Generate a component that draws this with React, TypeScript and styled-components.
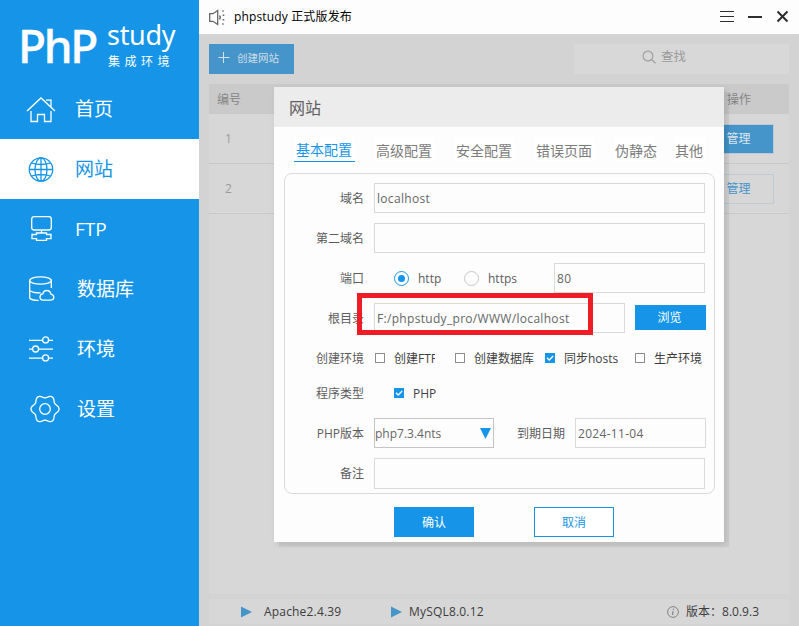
import React from "react";
import styled, { createGlobalStyle, css } from "styled-components";

const BLUE = "#1695e8";

const GlobalStyle = createGlobalStyle`
  * { box-sizing: border-box; }
  body {
    margin: 0;
    font-family: "Open Sans", "Noto Sans CJK SC", sans-serif;
    font-size: 12px;
    line-height: 16px;
    color: #5c5c5c;
    overflow: hidden;
  }
`;

const Window = styled.div`
  position: relative;
  display: flex;
  width: 799px;
  height: 626px;
  background: #d3d3d3;
`;

/* Sidebar */
const Sidebar = styled.nav`
  width: 199px;
  flex: none;
  background: ${BLUE};
  color: #fff;
`;
const Logo = styled.div`
  display: flex;
  height: 79px;
  padding-left: 18px;
`;
const LogoMark = styled.div`
  width: 89px;
  padding-top: 22px;
  font: 500 46px/46px "Noto Sans", sans-serif;
  letter-spacing: -2.3px;
  -webkit-text-stroke: 0.4px #fff;
  white-space: nowrap;
`;
const LogoSide = styled.div`
  padding-top: 19px;
`;
const LogoWord = styled.div`
  font: 400 27px/32px "Noto Sans", sans-serif;
  letter-spacing: -0.3px;
  height: 34px;
`;
const LogoTag = styled.div`
  padding-left: 1px;
  font-size: 12px;
  line-height: 17px;
  letter-spacing: 4.5px;
  white-space: nowrap;
`;
const NavItem = styled.a<{ $active?: boolean }>`
  display: flex;
  align-items: center;
  height: 60px;
  padding-left: 26px;
  font-size: 19px;
  line-height: 28px;
  color: ${(p) => (p.$active ? BLUE : "#fff")};
  background: ${(p) => (p.$active ? "#fff" : "transparent")};
`;
const NavIcon = styled.svg`
  width: 34px;
  height: 30px;
  margin-right: 15px;
  flex: none;
  fill: none;
  stroke: currentColor;
  stroke-width: 1.3;
`;
const NavLabel = styled.span<{ $shift?: number }>`
  padding-left: ${(p) => p.$shift ?? 0}px;
`;

/* Main area */
const Main = styled.main`
  flex: 1;
  display: flex;
  flex-direction: column;
`;
const TitleBar = styled.header`
  display: flex;
  align-items: center;
  height: 34px;
  padding: 0 9px 0 10px;
  background: #fdfdfd;
  color: #111;
`;
const Notice = styled.span`
  flex: 1;
  padding-left: 9px;
  letter-spacing: 0.15px;
  color: #000;
`;
const Body = styled.div`
  flex: 1;
  display: flex;
  flex-direction: column;
  padding: 10px 10px 2px;
`;
const Toolbar = styled.div`
  display: flex;
  justify-content: space-between;
  height: 30px;
  margin-bottom: 10px;
`;
const CreateButton = styled.button`
  display: flex;
  align-items: center;
  gap: 7px;
  width: 85px;
  padding: 0 0 3px 9px;
  border: 0;
  background: #4595cb;
  color: #cfdde6;
  font: inherit;
  font-size: 10.5px;
  white-space: nowrap;
`;
const Search = styled.div`
  display: flex;
  align-items: center;
  gap: 5px;
  width: 215px;
  padding: 0 0 4px 68px;
  background: #d8d8d8;
  color: #9b9b9b;
  font-size: 12.5px;
`;
const Table = styled.section`
  flex: 1;
  background: #d7d7d7;
`;
const TableRow = styled.div<{ $head?: boolean }>`
  display: flex;
  justify-content: space-between;
  align-items: center;
  height: ${(p) => (p.$head ? 30 : 50)}px;
  padding: ${(p) => (p.$head ? "2px 38px 0 8px" : "0 15px 0 16px")};
  color: ${(p) => (p.$head ? "#858585" : "#9a9a9a")};
  background: ${(p) => (p.$head ? "#cacaca" : "transparent")};
  border-bottom: ${(p) => (p.$head ? "0" : "1px solid #c8c8c8")};
`;
const ManageButton = styled.button<{ $solid?: boolean }>`
  width: 82px;
  height: 30px;
  padding: 0 0 0 11px;
  text-align: center;
  font: inherit;
  border: 1px solid #bccbd6;
  background: ${(p) => (p.$solid ? "#4595cb" : "transparent")};
  color: ${(p) => (p.$solid ? "#dde6ec" : "#4595cb")};
`;
const StatusBar = styled.footer`
  display: flex;
  align-items: center;
  height: 25px;
  margin-top: 5px;
  padding: 0 30px 0 32px;
  background: #d7d7d7;
  color: #3d3d3d;
`;
const Service = styled.div<{ $width: number; $gap: number }>`
  display: flex;
  align-items: center;
  gap: ${(p) => p.$gap}px;
  width: ${(p) => p.$width}px;
  letter-spacing: 0.18px;
  white-space: nowrap;
`;
const Version = styled.div`
  display: flex;
  align-items: center;
  gap: 7px;
  margin-left: auto;
`;

/* Dialog */
const Dialog = styled.section`
  position: absolute;
  left: 274px;
  top: 87px;
  width: 450px;
  height: 455px;
  background: #fdfdfd;
  box-shadow: 5px 5px 0 rgba(0, 0, 0, 0.05), 2px 2px 6px rgba(0, 0, 0, 0.1);
`;
const DialogTitle = styled.h1`
  margin: 0;
  height: 40px;
  padding: 10px 15px;
  background: #ececec;
  font-size: 16px;
  line-height: 22px;
  font-weight: 400;
  color: #606060;
`;
const Tabs = styled.div`
  display: flex;
  gap: 19px;
  height: 46px;
  padding: 10px 0 0 20px;
`;
const Tab = styled.div<{ $active?: boolean; $width: number }>`
  width: ${(p) => p.$width}px;
  height: 25px;
  flex: none;
  padding-left: ${(p) => (p.$width < 60 ? 1 : 2)}px;
  font-size: 14px;
  line-height: ${(p) => (p.$active ? 26 : 28)}px;
  white-space: nowrap;
  background: #fff;
  color: ${(p) => (p.$active ? BLUE : "#7c7c7c")};
  border-bottom: 1px solid ${(p) => (p.$active ? BLUE : "transparent")};
`;
const Form = styled.div`
  display: flex;
  flex-direction: column;
  gap: 10px;
  width: 431px;
  height: 321px;
  margin-left: 10px;
  padding: 9px 0 0;
  border: 1px solid #d9dadb;
  border-radius: 8px;
`;
const Row = styled.div<{ $tight?: boolean }>`
  display: flex;
  align-items: center;
  height: 30px;
  flex: none;
  margin-top: ${(p) => (p.$tight ? -5 : 0)}px;
`;
const Label = styled.label<{ $width?: number }>`
  width: ${(p) => p.$width ?? 79}px;
  flex: none;
  margin-right: 10px;
  padding-top: 2px;
  text-align: right;
  white-space: nowrap;
`;
const Field = styled.div<{ $width: number; $tall?: boolean; $dark?: boolean }>`
  display: flex;
  align-items: center;
  width: ${(p) => p.$width}px;
  height: 30px;
  flex: none;
  padding: 2px 2px 0;
  border: 1px solid ${(p) => (p.$dark ? "#c4c4c4" : "#dadada")};
  white-space: nowrap;
  letter-spacing: ${(p) => (p.$dark ? 0 : 0.31)}px;
  color: #666;
  ${(p) => p.$tall && css`height: 31px; margin-top: 1px;`}
  ${(p) => p.$dark && css`justify-content: space-between; padding: 1px 2px 0 0;`}
`;
const Button = styled.button<{ $outline?: boolean; $small?: boolean }>`
  width: ${(p) => (p.$small ? 71 : 80)}px;
  height: ${(p) => (p.$small ? 25 : 30)}px;
  padding: 1px 0 0;
  font: inherit;
  border: 1px solid ${BLUE};
  background: ${(p) => (p.$outline ? "#fff" : BLUE)};
  color: ${(p) => (p.$outline ? BLUE : "#fff")};
  ${(p) => p.$small && css`margin: 0 0 1px 10px; padding-right: 2px;`}
`;
const RadioLabel = styled.div<{ $width: number }>`
  display: flex;
  align-items: center;
  gap: 9px;
  width: ${(p) => p.$width}px;
`;
const RadioText = styled.span`
  padding-top: 2px;
`;
const Radio = styled.i<{ $on?: boolean }>`
  display: flex;
  align-items: center;
  justify-content: center;
  width: 15px;
  height: 15px;
  border: 1px solid ${(p) => (p.$on ? BLUE : "#c8c8c8")};
  border-radius: 50%;
  &::after {
    content: "";
    width: 7px;
    height: 7px;
    border-radius: 50%;
    background: ${(p) => (p.$on ? BLUE : "transparent")};
  }
`;
const CheckItem = styled.div<{ $width: number }>`
  display: flex;
  align-items: center;
  width: ${(p) => p.$width}px;
  padding-left: 1px;
  flex: none;
  color: #3f3f3f;
`;
const CheckText = styled.span<{ $clip?: number }>`
  margin-left: 9px;
  padding-top: 2px;
  white-space: nowrap;
  overflow: hidden;
  width: ${(p) => (p.$clip ? `${p.$clip}px` : "auto")};
`;
const Box = styled.i<{ $on?: boolean }>`
  width: 10px;
  height: 10px;
  flex: none;
  display: flex;
  border: 1px solid ${(p) => (p.$on ? BLUE : "#8c8c8c")};
  background: ${(p) => (p.$on ? BLUE : "#fff")};
`;
const Actions = styled.div`
  display: flex;
  gap: 60px;
  padding: 13px 0 0 120px;
`;
const Spacer = styled.span<{ $width: number }>`
  width: ${(p) => p.$width}px;
  flex: none;
`;
const Highlight = styled.div`
  position: absolute;
  left: 357px;
  top: 293px;
  width: 236px;
  height: 42px;
  border: 5px solid #ee1c24;
`;

/* Six-lobed outline, wobbling around a circle. */
const gearOutline =
  "M" +
  Array.from({ length: 120 }, (_, i) => {
    const a = (i / 120) * Math.PI * 2;
    const r = 12.6 + 1.4 * Math.cos(6 * a);
    return `${(19 + r * Math.cos(a)).toFixed(2)} ${(15 + r * Math.sin(a)).toFixed(2)}`;
  }).join("L") +
  "Z";

const icons = {
  home: <path d="M1 17 15 4l14 13M20 6.200h5V13M5 17v10.500h6.500v-7h7v7H25V17" />,
  globe: (
    <>
      <circle cx="15" cy="15.500" r="11.700" />
      <ellipse cx="15" cy="15.500" rx="6" ry="11.700" />
      <path d="M15 3.800v23.400M3.300 15.500h23.400M5.500 9q9.500 3 19 0M5.500 22q9.500-3 19 0" />
    </>
  ),
  ftp: (
    <>
      <rect x="5.700" y="2.600" width="19.600" height="13.400" rx="2.500" />
      <path d="M15.500 16v3M10.500 19h10v1.500H25v4.100h-4.500v1.800h-10v-1.800H6v-4.100h4.500z" />
    </>
  ),
  database: (
    <>
      <ellipse cx="14.500" cy="6.500" rx="10.800" ry="3.600" />
      <path d="M3.700 6.500V24q2 2.600 9 2.400M25.300 6.500V14M3.700 16.500q3 2.500 11 2.400" />
      <path d="M17.200 26.200q-3.400-.2-3.200-3.300.2-2.700 2.800-3 .8-3.400 3.900-3.400 3.400 0 4.200 3.600 2.700.4 2.900 3 0 2.800-2.600 3.100z" />
    </>
  ),
  sliders: (
    <>
      <path d="M3 6.300h13.500M22.700 6.300H27M3 15.200h3.500M12.700 15.200H27M3 24.200h13.500M22.700 24.200H27" />
      <circle cx="19.600" cy="5.900" r="3" />
      <circle cx="9.600" cy="15" r="3" />
      <circle cx="19.600" cy="23.900" r="3" />
    </>
  ),
  gear: (
    <>
      <circle cx="19" cy="15" r="5.300" />
      <path d={gearOutline} />
    </>
  ),
};

type NavEntry = { icon: keyof typeof icons; text: string; active?: boolean; shift?: number };
const nav: NavEntry[] = [
  { icon: "home", text: "首页" },
  { icon: "globe", text: "网站", active: true },
  { icon: "ftp", text: "FTP" },
  { icon: "database", text: "数据库", shift: 2 },
  { icon: "sliders", text: "环境", shift: 2 },
  { icon: "gear", text: "设置", shift: 2 },
];

const tabs = [
  { text: "基本配置", width: 61 },
  { text: "高级配置", width: 61 },
  { text: "安全配置", width: 61 },
  { text: "错误页面", width: 61 },
  { text: "伪静态", width: 41 },
  { text: "其他", width: 31 },
];

const Check = ({ on, text, width, clip }: { on?: boolean; text: string; width: number; clip?: number }) => (
  <CheckItem $width={width}>
    <Box $on={on}>
      {on && (
        <svg width="8" height="8" fill="none" stroke="#fff" strokeWidth="1.300">
          <path d="M1 3.800 3.200 6 7.200 2" />
        </svg>
      )}
    </Box>
    <CheckText $clip={clip}>{text}</CheckText>
  </CheckItem>
);

const Play = () => (
  <svg width="11" height="12" fill="#4595cb">
    <path d="M0 .5 11 6 0 11.500z" />
  </svg>
);

export default function App() {
  return (
    <Window>
      <GlobalStyle />
      <Sidebar>
        <Logo>
          <LogoMark>PhP</LogoMark>
          <LogoSide>
            <LogoWord>study</LogoWord>
            <LogoTag>集成环境</LogoTag>
          </LogoSide>
        </Logo>
        {nav.map((n) => (
          <NavItem key={n.icon} $active={n.active}>
            <NavIcon viewBox="0 0 34 30">{icons[n.icon]}</NavIcon>
            <NavLabel $shift={n.shift}>{n.text}</NavLabel>
          </NavItem>
        ))}
      </Sidebar>

      <Main>
        <TitleBar>
          <svg width="16" height="17" fill="none" stroke="#666" strokeWidth="1.300">
            <path d="M.7 4.700H4L8.700 1.500v14L4 12.300H.7zM10.500 6.500q1.600 2 0 4" />
            <path d="M13.500 1.500l1 1M14.500 5.500v1.500M14.500 10v1.500M13.500 15.500l1-1" strokeWidth="1.600" />
          </svg>
          <Notice>phpstudy 正式版发布</Notice>
          <svg width="71" height="16" fill="none" stroke="#2e2e2e">
            <path d="M1 2.500h14M1 7.500h14M1 12.500h14" />
            <path d="M29 8h14" strokeWidth="2" />
            <path d="M58.500 2.500l10 10M68.500 2.500l-10 10" strokeWidth="2" />
          </svg>
        </TitleBar>
        <Body>
          <Toolbar>
            <CreateButton>
              <svg width="12" height="12" stroke="#d5e0e8">
                <path d="M.5 5.500h11M5.500 0v11" />
              </svg>
              创建网站
            </CreateButton>
            <Search>
              <svg width="14" height="14" fill="none" stroke="#a0a0a0" strokeWidth="1.200">
                <circle cx="6" cy="6" r="4.900" />
                <path d="M9.500 9.500l4 3.700" />
              </svg>
              查找
            </Search>
          </Toolbar>
          <Table>
            <TableRow $head>
              <span>编号</span>
              <span>操作</span>
            </TableRow>
            <TableRow>
              <span>1</span>
              <ManageButton $solid>管理</ManageButton>
            </TableRow>
            <TableRow>
              <span>2</span>
              <ManageButton>管理</ManageButton>
            </TableRow>
          </Table>
          <StatusBar>
            <Service $width={150} $gap={12}>
              <Play />
              Apache2.4.39
            </Service>
            <Service $width={110} $gap={7}>
              <Play />
              MySQL8.0.12
            </Service>
            <Version>
              <svg width="12" height="12" fill="none" stroke="#858585">
                <circle cx="6" cy="6" r="5.400" />
                <path d="M6.400 2.700v1.200M6.100 5 5.500 9" strokeWidth="1.200" />
              </svg>
              <span>版本：8.0.9.3</span>
            </Version>
          </StatusBar>
        </Body>
      </Main>

      <Dialog>
        <DialogTitle>网站</DialogTitle>
        <Tabs>
          {tabs.map((t, i) => (
            <Tab key={t.text} $active={i === 0} $width={t.width}>
              {t.text}
            </Tab>
          ))}
        </Tabs>
        <Form>
          <Row>
            <Label>域名</Label>
            <Field $width={331}>localhost</Field>
          </Row>
          <Row>
            <Label>第二域名</Label>
            <Field $width={331} />
          </Row>
          <Row>
            <Label>端口</Label>
            <Spacer $width={20} />
            <RadioLabel $width={70}>
              <Radio $on />
              <RadioText>http</RadioText>
            </RadioLabel>
            <RadioLabel $width={90}>
              <Radio />
              <RadioText>https</RadioText>
            </RadioLabel>
            <Field $width={151}>80</Field>
          </Row>
          <Row>
            <Label>根目录</Label>
            <Field $width={251}>F:/phpstudy_pro/WWW/localhost</Field>
            <Button $small>浏览</Button>
          </Row>
          <Row>
            <Label>创建环境</Label>
            <Check text="创建FTP" width={80} clip={41} />
            <Check text="创建数据库" width={90} />
            <Check text="同步hosts" width={90} on />
            <Check text="生产环境" width={75} />
          </Row>
          <Row $tight>
            <Label>程序类型</Label>
            <Spacer $width={19} />
            <Check text="PHP" width={80} on />
          </Row>
          <Row>
            <Label>PHP版本</Label>
            <Field $width={120} $dark>
              php7.3.4nts
              <svg width="11" height="11" fill={BLUE}>
                <path d="M0 0h11L5.500 11z" />
              </svg>
            </Field>
            <Spacer $width={22} />
            <Label $width={49}>到期日期</Label>
            <Field $width={131}>2024-11-04</Field>
          </Row>
          <Row>
            <Label>备注</Label>
            <Field $width={331} $tall />
          </Row>
        </Form>
        <Actions>
          <Button>确认</Button>
          <Button $outline>取消</Button>
        </Actions>
      </Dialog>
      <Highlight />
    </Window>
  );
}
